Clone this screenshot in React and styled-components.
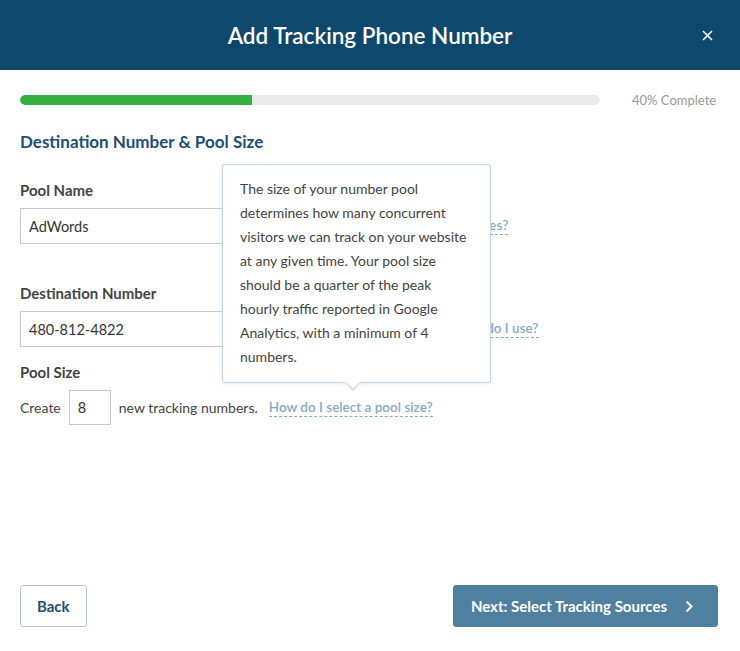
import React from 'react'
import styled, { createGlobalStyle } from 'styled-components'

const GlobalStyle = createGlobalStyle`
  html, body {
    margin: 0;
    padding: 0;
    background: #fff;
  }
  body {
    font-family: Lato, "Liberation Sans", sans-serif;
    color: #444;
  }
  * { box-sizing: border-box; }
`

const Modal = styled.div`
  width: 740px;
  height: 651px;
  display: flex;
  flex-direction: column;
  background: #fff;
`

const Header = styled.header`
  height: 70px;
  background: #0e486c;
  display: flex;
  align-items: center;
  justify-content: center;
  position: relative;
`

const Title = styled.h1`
  margin: 0;
  color: #fff;
  font-size: 22.5px;
  font-weight: 600;
`

const Close = styled.button`
  position: absolute;
  right: 23px;
  top: 25px;
  background: none;
  border: 0;
  padding: 0;
  width: 20px;
  height: 20px;
  display: flex;
  align-items: center;
  justify-content: center;
  cursor: pointer;
`

const Body = styled.main`
  flex: 1;
  padding: 25px 20px 0;
  position: relative;
`

const ProgressRow = styled.div`
  display: flex;
  align-items: center;
  gap: 32px;
  height: 10px;
`

const Track = styled.div`
  width: 580px;
  height: 10px;
  border-radius: 5px;
  background: #ebebeb;
  overflow: hidden;
`

const Fill = styled.div`
  height: 100%;
  background: #35b041;
  border-radius: 5px 0 0 5px;
`

const ProgressText = styled.span`
  font-size: 13px;
  color: #9a9a9a;
  white-space: nowrap;
`

const SectionTitle = styled.h2`
  margin: 26px 0 0;
  font-size: 17px;
  font-weight: 700;
  color: #1d4e73;
  line-height: 22px;
`

const Field = styled.div`
  margin-top: ${p => p.$top}px;
`

const Label = styled.label`
  display: block;
  font-size: 15px;
  font-weight: 700;
  color: #444;
  line-height: 20px;
  margin-bottom: 8px;
`

const InputRow = styled.div`
  display: flex;
  align-items: center;
  gap: 14px;
`

const TextInput = styled.input`
  width: ${p => p.$w}px;
  height: ${p => p.$h || 36}px;
  border: 1px solid #c9c9c9;
  border-radius: 0;
  padding: 0 8px;
  font-family: inherit;
  font-size: 14.5px;
  color: #333;
  outline: none;
`

const HelpLink = styled.a`
  font-size: 13.5px;
  font-weight: 600;
  color: #8aa9c2;
  text-decoration: none;
  border-bottom: 1px dashed #8aa9c2;
  line-height: 17px;
  white-space: nowrap;
`

const InlineText = styled.span`
  font-size: 14px;
  color: #444;
`

const SizeRow = styled.div`
  display: flex;
  align-items: center;
  gap: 8px;
`

const Tooltip = styled.div`
  position: absolute;
  left: 222px;
  top: 94px;
  width: 269px;
  height: 219px;
  background: #fff;
  border: 1px solid #c3d5e2;
  border-radius: 2px;
  box-shadow: 0 1px 4px rgba(0, 0, 0, 0.08);
  padding: 12px 16px 0 17px;
  font-size: 14px;
  line-height: 24px;
  color: #444;

  &::after,
  &::before {
    content: '';
    position: absolute;
    left: 122px;
    width: 0;
    height: 0;
    border-left: 8px solid transparent;
    border-right: 8px solid transparent;
  }
  &::before {
    bottom: -9px;
    border-top: 9px solid #c3d5e2;
  }
  &::after {
    bottom: -7px;
    border-top: 8px solid #fff;
  }
`

const Footer = styled.footer`
  display: flex;
  justify-content: space-between;
  align-items: center;
  padding: 0 22px 24px 20px;
`

const Button = styled.button`
  height: 42px;
  border-radius: 3px;
  font-family: inherit;
  font-size: 15px;
  font-weight: 700;
  display: flex;
  align-items: center;
  gap: 18px;
  cursor: pointer;
  padding: ${p => (p.$primary ? '0 24px 0 17px' : '0 16px')};
  border: 1px solid ${p => (p.$primary ? '#5080a0' : '#b6c6d3')};
  background: ${p => (p.$primary ? '#5080a0' : '#fff')};
  color: ${p => (p.$primary ? '#fff' : '#1d4e73')};
`

const App = () => {
  const progress = 40
  return (
    <Modal>
      <GlobalStyle />
      <Header>
        <Title>Add Tracking Phone Number</Title>
        <Close aria-label="Close">
          <svg width="11" height="11" viewBox="0 0 11 11">
            <path d="M1 1L10 10M10 1L1 10" stroke="#fff" strokeWidth="1.6" />
          </svg>
        </Close>
      </Header>
      <Body>
        <ProgressRow>
          <Track>
            <Fill style={{ width: `${progress}%` }} />
          </Track>
          <ProgressText>{progress}% Complete</ProgressText>
        </ProgressRow>
        <SectionTitle>Destination Number &amp; Pool Size</SectionTitle>

        <Field $top={27}>
          <Label>Pool Name</Label>
          <InputRow>
            <TextInput $w={290} defaultValue="AdWords" />
            <HelpLink href="#">Why do my pools need names?</HelpLink>
          </InputRow>
        </Field>

        <Field $top={39}>
          <Label>Destination Number</Label>
          <InputRow>
            <TextInput $w={290} defaultValue="480-812-4822" />
            <HelpLink href="#">Which destination number do I use?</HelpLink>
          </InputRow>
        </Field>

        <Field $top={15}>
          <Label>Pool Size</Label>
          <SizeRow>
            <InlineText>Create</InlineText>
            <TextInput $w={42} $h={35} defaultValue="8" />
            <InlineText>new tracking numbers.</InlineText>
            <HelpLink href="#" style={{ marginLeft: 3 }}>How do I select a pool size?</HelpLink>
          </SizeRow>
        </Field>

        <Tooltip>
          The size of your number pool determines how many concurrent visitors we can
          track on your website at any given time. Your pool size should be a quarter of
          the peak hourly traffic reported in Google Analytics, with a minimum of 4
          numbers.
        </Tooltip>
      </Body>
      <Footer>
        <Button>Back</Button>
        <Button $primary>
          Next: Select Tracking Sources
          <svg width="8" height="13" viewBox="0 0 8 13">
            <path d="M1.5 1.5L6.5 6.5L1.5 11.5" stroke="#fff" strokeWidth="2" fill="none" />
          </svg>
        </Button>
      </Footer>
    </Modal>
  )
}

export default App
